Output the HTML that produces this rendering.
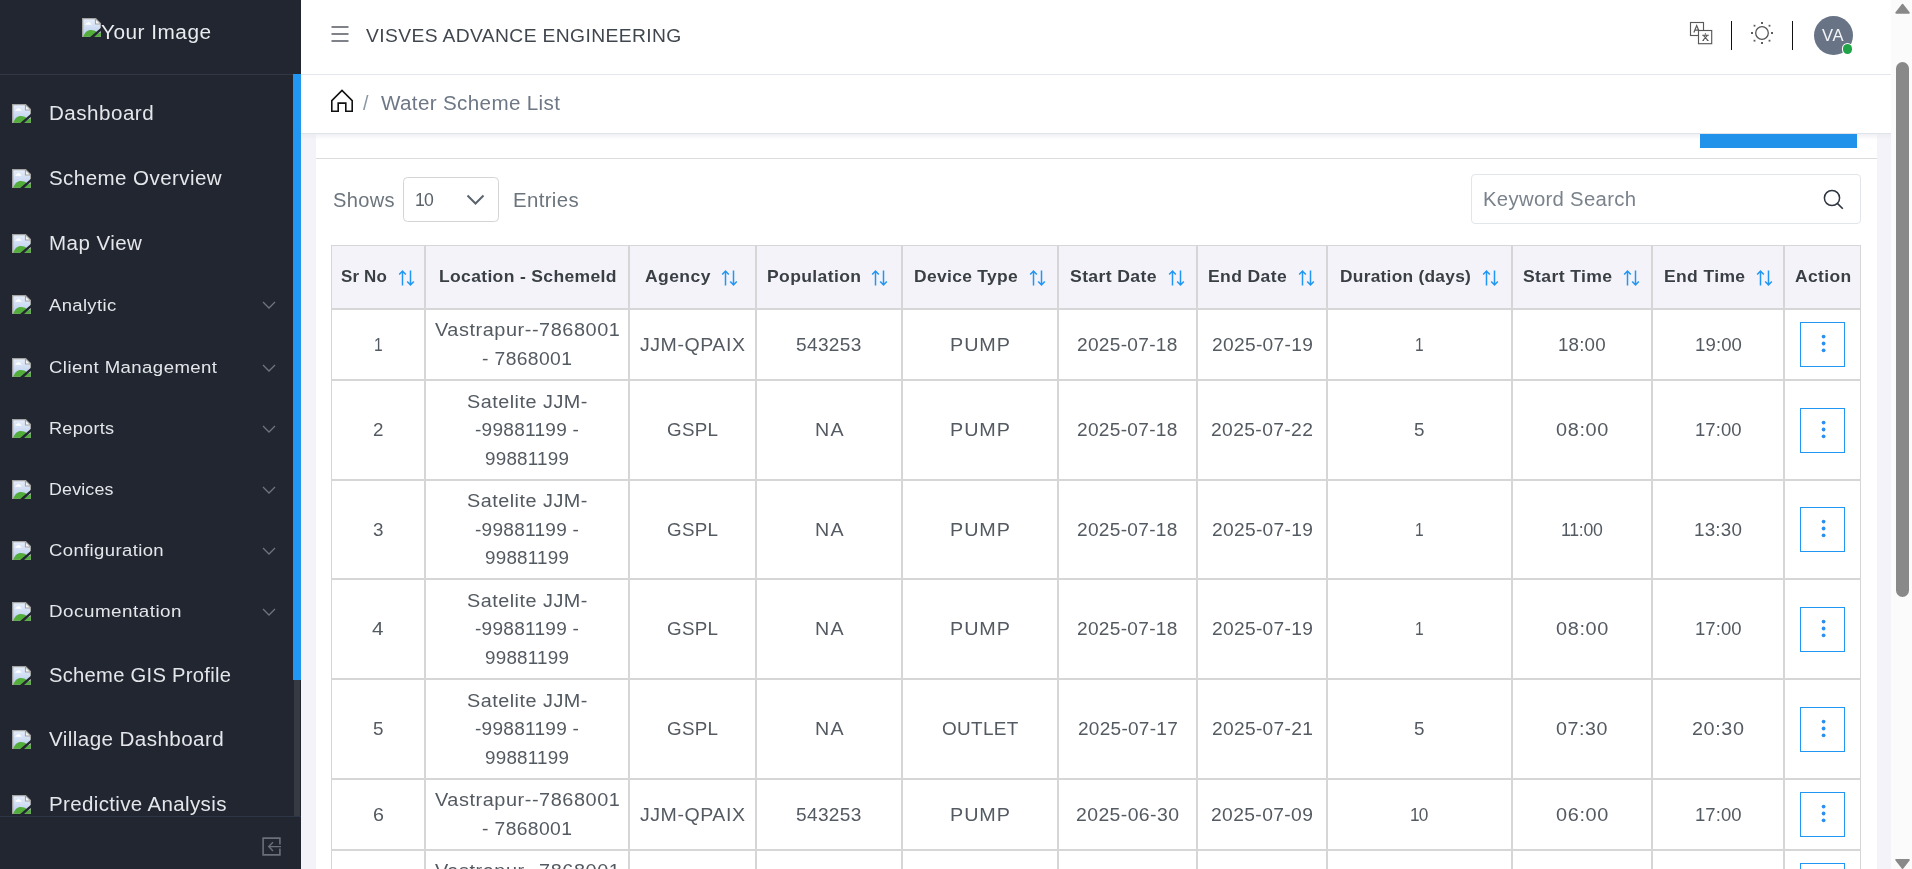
<!DOCTYPE html>
<html><head><meta charset="utf-8"><title>Water Scheme List</title>
<style>
html,body{margin:0;padding:0;width:1912px;height:869px;overflow:hidden;font-family:"Liberation Sans",sans-serif;}
.t{position:absolute;white-space:nowrap;}
.b{position:absolute;}
</style></head><body>
<div style="position:absolute;left:0;top:0;width:1912px;height:869px;overflow:hidden;will-change:transform">
<div class="b" style="left:0px;top:0px;width:1912px;height:869px;background:#f3f3f9;"></div>
<div class="b" style="left:301px;top:0px;width:1590px;height:74px;background:#fff;"></div>
<div class="b" style="left:301px;top:74px;width:1590px;height:1px;background:#e3e6ec;"></div>
<div class="b" style="left:301px;top:75px;width:1590px;height:58px;background:#fff;"></div>
<div class="b" style="left:301px;top:133px;width:1590px;height:1px;background:#dfe3ea;"></div>
<div class="b" style="left:301px;top:134px;width:1590px;height:6px;background:linear-gradient(#ececf2,rgba(243,243,249,0));"></div>
<div class="b" style="left:316px;top:140px;width:1561px;height:729px;background:#fff;"></div>
<div class="b" style="left:316px;top:134px;width:1561px;height:6px;background:linear-gradient(#f0f0f5,#fff);"></div>
<div class="b" style="left:316px;top:158px;width:1561px;height:1px;background:#dcdcdf;"></div>
<div class="b" style="left:1700px;top:134px;width:157px;height:14px;background:#2092ea;"></div>
<div class="b" style="left:0px;top:0px;width:301px;height:869px;background:#212631;"></div>
<div class="b" style="left:0px;top:74px;width:301px;height:1px;background:#323746;"></div>
<div class="b" style="left:293px;top:74px;width:8px;height:606px;background:#2196f3;"></div>
<div class="b" style="left:294px;top:680px;width:6px;height:136px;background:#363a43;"></div>
<div class="b" style="left:0px;top:816px;width:301px;height:1px;background:#2d3646;"></div>
<svg class="b" style="left:81.5px;top:18px" width="19.4" height="19.4" viewBox="0 0 16 16">
<defs><linearGradient id="sky81.518" x1="0" y1="0" x2="0" y2="1"><stop offset="0" stop-color="#e6eefa"/><stop offset="1" stop-color="#b9cdee"/></linearGradient></defs>
<path d="M0.55 0.55H11.1L15.45 4.9V15.45H0.55Z" fill="url(#sky81.518)" stroke="#a3a3a3" stroke-width="1.1"/>
<path d="M11.1 0.55V4.9H15.45Z" fill="#f6f6f6" stroke="#a3a3a3" stroke-width="0.9" stroke-linejoin="round"/>
<path d="M2.6 5.6C2.9 4.6 3.6 4.1 4.3 4.1C4.8 3.1 6.3 3.1 6.8 4.3C7.5 4.4 7.8 5 7.7 5.6Z" fill="#fff"/>
<path d="M1.1 15.45C2 12 4.4 9.8 7.4 9.8C9.4 9.8 10.8 10.5 11.8 11.3V15.45Z" fill="#52ad3b"/>
<path d="M9.8 15.45C11.8 13.6 13.4 12.4 15.45 12V15.45Z" fill="#52ad3b"/>
<path d="M5.7 16.6L8.9 16.6L16.6 9.7L16.6 7.2Z" fill="#212631"/>
</svg>
<div class="t" style="left:101.00px;top:23.0px;font-size:19.5px;line-height:19.5px;color:#e9ecef;letter-spacing:0.458px;transform:scaleX(1.0667);transform-origin:0 0;">Your Image</div>
<svg class="b" style="left:12px;top:104px" width="19.4" height="19.4" viewBox="0 0 16 16">
<defs><linearGradient id="sky12104" x1="0" y1="0" x2="0" y2="1"><stop offset="0" stop-color="#e6eefa"/><stop offset="1" stop-color="#b9cdee"/></linearGradient></defs>
<path d="M0.55 0.55H11.1L15.45 4.9V15.45H0.55Z" fill="url(#sky12104)" stroke="#a3a3a3" stroke-width="1.1"/>
<path d="M11.1 0.55V4.9H15.45Z" fill="#f6f6f6" stroke="#a3a3a3" stroke-width="0.9" stroke-linejoin="round"/>
<path d="M2.6 5.6C2.9 4.6 3.6 4.1 4.3 4.1C4.8 3.1 6.3 3.1 6.8 4.3C7.5 4.4 7.8 5 7.7 5.6Z" fill="#fff"/>
<path d="M1.1 15.45C2 12 4.4 9.8 7.4 9.8C9.4 9.8 10.8 10.5 11.8 11.3V15.45Z" fill="#52ad3b"/>
<path d="M9.8 15.45C11.8 13.6 13.4 12.4 15.45 12V15.45Z" fill="#52ad3b"/>
<path d="M5.7 16.6L8.9 16.6L16.6 9.7L16.6 7.2Z" fill="#212631"/>
</svg>
<div class="t" style="left:48.50px;top:104.0px;font-size:19.4px;line-height:19.4px;color:#e4e6ea;letter-spacing:0.461px;transform:scaleX(1.0620);transform-origin:0 0;">Dashboard</div>
<svg class="b" style="left:12px;top:169px" width="19.4" height="19.4" viewBox="0 0 16 16">
<defs><linearGradient id="sky12169" x1="0" y1="0" x2="0" y2="1"><stop offset="0" stop-color="#e6eefa"/><stop offset="1" stop-color="#b9cdee"/></linearGradient></defs>
<path d="M0.55 0.55H11.1L15.45 4.9V15.45H0.55Z" fill="url(#sky12169)" stroke="#a3a3a3" stroke-width="1.1"/>
<path d="M11.1 0.55V4.9H15.45Z" fill="#f6f6f6" stroke="#a3a3a3" stroke-width="0.9" stroke-linejoin="round"/>
<path d="M2.6 5.6C2.9 4.6 3.6 4.1 4.3 4.1C4.8 3.1 6.3 3.1 6.8 4.3C7.5 4.4 7.8 5 7.7 5.6Z" fill="#fff"/>
<path d="M1.1 15.45C2 12 4.4 9.8 7.4 9.8C9.4 9.8 10.8 10.5 11.8 11.3V15.45Z" fill="#52ad3b"/>
<path d="M9.8 15.45C11.8 13.6 13.4 12.4 15.45 12V15.45Z" fill="#52ad3b"/>
<path d="M5.7 16.6L8.9 16.6L16.6 9.7L16.6 7.2Z" fill="#212631"/>
</svg>
<div class="t" style="left:48.50px;top:169.0px;font-size:19.4px;line-height:19.4px;color:#e4e6ea;letter-spacing:0.413px;transform:scaleX(1.0583);transform-origin:0 0;">Scheme Overview</div>
<svg class="b" style="left:12px;top:234px" width="19.4" height="19.4" viewBox="0 0 16 16">
<defs><linearGradient id="sky12234" x1="0" y1="0" x2="0" y2="1"><stop offset="0" stop-color="#e6eefa"/><stop offset="1" stop-color="#b9cdee"/></linearGradient></defs>
<path d="M0.55 0.55H11.1L15.45 4.9V15.45H0.55Z" fill="url(#sky12234)" stroke="#a3a3a3" stroke-width="1.1"/>
<path d="M11.1 0.55V4.9H15.45Z" fill="#f6f6f6" stroke="#a3a3a3" stroke-width="0.9" stroke-linejoin="round"/>
<path d="M2.6 5.6C2.9 4.6 3.6 4.1 4.3 4.1C4.8 3.1 6.3 3.1 6.8 4.3C7.5 4.4 7.8 5 7.7 5.6Z" fill="#fff"/>
<path d="M1.1 15.45C2 12 4.4 9.8 7.4 9.8C9.4 9.8 10.8 10.5 11.8 11.3V15.45Z" fill="#52ad3b"/>
<path d="M9.8 15.45C11.8 13.6 13.4 12.4 15.45 12V15.45Z" fill="#52ad3b"/>
<path d="M5.7 16.6L8.9 16.6L16.6 9.7L16.6 7.2Z" fill="#212631"/>
</svg>
<div class="t" style="left:48.50px;top:234.0px;font-size:19.4px;line-height:19.4px;color:#e4e6ea;letter-spacing:0.438px;transform:scaleX(1.0572);transform-origin:0 0;">Map View</div>
<svg class="b" style="left:12px;top:295px" width="19.4" height="19.4" viewBox="0 0 16 16">
<defs><linearGradient id="sky12295" x1="0" y1="0" x2="0" y2="1"><stop offset="0" stop-color="#e6eefa"/><stop offset="1" stop-color="#b9cdee"/></linearGradient></defs>
<path d="M0.55 0.55H11.1L15.45 4.9V15.45H0.55Z" fill="url(#sky12295)" stroke="#a3a3a3" stroke-width="1.1"/>
<path d="M11.1 0.55V4.9H15.45Z" fill="#f6f6f6" stroke="#a3a3a3" stroke-width="0.9" stroke-linejoin="round"/>
<path d="M2.6 5.6C2.9 4.6 3.6 4.1 4.3 4.1C4.8 3.1 6.3 3.1 6.8 4.3C7.5 4.4 7.8 5 7.7 5.6Z" fill="#fff"/>
<path d="M1.1 15.45C2 12 4.4 9.8 7.4 9.8C9.4 9.8 10.8 10.5 11.8 11.3V15.45Z" fill="#52ad3b"/>
<path d="M9.8 15.45C11.8 13.6 13.4 12.4 15.45 12V15.45Z" fill="#52ad3b"/>
<path d="M5.7 16.6L8.9 16.6L16.6 9.7L16.6 7.2Z" fill="#212631"/>
</svg>
<div class="t" style="left:48.50px;top:297.0px;font-size:17.4px;line-height:17.4px;color:#e4e6ea;letter-spacing:0.336px;transform:scaleX(1.0615);transform-origin:0 0;">Analytic</div>
<svg class="b" style="left:262px;top:301.3px" width="14" height="8" viewBox="0 0 14 8"><path d="M1 1l6 6 6-6" fill="none" stroke="#6f747e" stroke-width="1.3"/></svg>
<svg class="b" style="left:12px;top:358px" width="19.4" height="19.4" viewBox="0 0 16 16">
<defs><linearGradient id="sky12358" x1="0" y1="0" x2="0" y2="1"><stop offset="0" stop-color="#e6eefa"/><stop offset="1" stop-color="#b9cdee"/></linearGradient></defs>
<path d="M0.55 0.55H11.1L15.45 4.9V15.45H0.55Z" fill="url(#sky12358)" stroke="#a3a3a3" stroke-width="1.1"/>
<path d="M11.1 0.55V4.9H15.45Z" fill="#f6f6f6" stroke="#a3a3a3" stroke-width="0.9" stroke-linejoin="round"/>
<path d="M2.6 5.6C2.9 4.6 3.6 4.1 4.3 4.1C4.8 3.1 6.3 3.1 6.8 4.3C7.5 4.4 7.8 5 7.7 5.6Z" fill="#fff"/>
<path d="M1.1 15.45C2 12 4.4 9.8 7.4 9.8C9.4 9.8 10.8 10.5 11.8 11.3V15.45Z" fill="#52ad3b"/>
<path d="M9.8 15.45C11.8 13.6 13.4 12.4 15.45 12V15.45Z" fill="#52ad3b"/>
<path d="M5.7 16.6L8.9 16.6L16.6 9.7L16.6 7.2Z" fill="#212631"/>
</svg>
<div class="t" style="left:48.50px;top:359.0px;font-size:17.4px;line-height:17.4px;color:#e4e6ea;letter-spacing:0.402px;transform:scaleX(1.0684);transform-origin:0 0;">Client Management</div>
<svg class="b" style="left:262px;top:363.5px" width="14" height="8" viewBox="0 0 14 8"><path d="M1 1l6 6 6-6" fill="none" stroke="#6f747e" stroke-width="1.3"/></svg>
<svg class="b" style="left:12px;top:419px" width="19.4" height="19.4" viewBox="0 0 16 16">
<defs><linearGradient id="sky12419" x1="0" y1="0" x2="0" y2="1"><stop offset="0" stop-color="#e6eefa"/><stop offset="1" stop-color="#b9cdee"/></linearGradient></defs>
<path d="M0.55 0.55H11.1L15.45 4.9V15.45H0.55Z" fill="url(#sky12419)" stroke="#a3a3a3" stroke-width="1.1"/>
<path d="M11.1 0.55V4.9H15.45Z" fill="#f6f6f6" stroke="#a3a3a3" stroke-width="0.9" stroke-linejoin="round"/>
<path d="M2.6 5.6C2.9 4.6 3.6 4.1 4.3 4.1C4.8 3.1 6.3 3.1 6.8 4.3C7.5 4.4 7.8 5 7.7 5.6Z" fill="#fff"/>
<path d="M1.1 15.45C2 12 4.4 9.8 7.4 9.8C9.4 9.8 10.8 10.5 11.8 11.3V15.45Z" fill="#52ad3b"/>
<path d="M9.8 15.45C11.8 13.6 13.4 12.4 15.45 12V15.45Z" fill="#52ad3b"/>
<path d="M5.7 16.6L8.9 16.6L16.6 9.7L16.6 7.2Z" fill="#212631"/>
</svg>
<div class="t" style="left:48.50px;top:420.0px;font-size:17.4px;line-height:17.4px;color:#e4e6ea;letter-spacing:0.272px;transform:scaleX(1.0418);transform-origin:0 0;">Reports</div>
<svg class="b" style="left:262px;top:424.7px" width="14" height="8" viewBox="0 0 14 8"><path d="M1 1l6 6 6-6" fill="none" stroke="#6f747e" stroke-width="1.3"/></svg>
<svg class="b" style="left:12px;top:480px" width="19.4" height="19.4" viewBox="0 0 16 16">
<defs><linearGradient id="sky12480" x1="0" y1="0" x2="0" y2="1"><stop offset="0" stop-color="#e6eefa"/><stop offset="1" stop-color="#b9cdee"/></linearGradient></defs>
<path d="M0.55 0.55H11.1L15.45 4.9V15.45H0.55Z" fill="url(#sky12480)" stroke="#a3a3a3" stroke-width="1.1"/>
<path d="M11.1 0.55V4.9H15.45Z" fill="#f6f6f6" stroke="#a3a3a3" stroke-width="0.9" stroke-linejoin="round"/>
<path d="M2.6 5.6C2.9 4.6 3.6 4.1 4.3 4.1C4.8 3.1 6.3 3.1 6.8 4.3C7.5 4.4 7.8 5 7.7 5.6Z" fill="#fff"/>
<path d="M1.1 15.45C2 12 4.4 9.8 7.4 9.8C9.4 9.8 10.8 10.5 11.8 11.3V15.45Z" fill="#52ad3b"/>
<path d="M9.8 15.45C11.8 13.6 13.4 12.4 15.45 12V15.45Z" fill="#52ad3b"/>
<path d="M5.7 16.6L8.9 16.6L16.6 9.7L16.6 7.2Z" fill="#212631"/>
</svg>
<div class="t" style="left:48.50px;top:481.0px;font-size:17.4px;line-height:17.4px;color:#e4e6ea;letter-spacing:0.169px;transform:scaleX(1.0252);transform-origin:0 0;">Devices</div>
<svg class="b" style="left:262px;top:485.7px" width="14" height="8" viewBox="0 0 14 8"><path d="M1 1l6 6 6-6" fill="none" stroke="#6f747e" stroke-width="1.3"/></svg>
<svg class="b" style="left:12px;top:541px" width="19.4" height="19.4" viewBox="0 0 16 16">
<defs><linearGradient id="sky12541" x1="0" y1="0" x2="0" y2="1"><stop offset="0" stop-color="#e6eefa"/><stop offset="1" stop-color="#b9cdee"/></linearGradient></defs>
<path d="M0.55 0.55H11.1L15.45 4.9V15.45H0.55Z" fill="url(#sky12541)" stroke="#a3a3a3" stroke-width="1.1"/>
<path d="M11.1 0.55V4.9H15.45Z" fill="#f6f6f6" stroke="#a3a3a3" stroke-width="0.9" stroke-linejoin="round"/>
<path d="M2.6 5.6C2.9 4.6 3.6 4.1 4.3 4.1C4.8 3.1 6.3 3.1 6.8 4.3C7.5 4.4 7.8 5 7.7 5.6Z" fill="#fff"/>
<path d="M1.1 15.45C2 12 4.4 9.8 7.4 9.8C9.4 9.8 10.8 10.5 11.8 11.3V15.45Z" fill="#52ad3b"/>
<path d="M9.8 15.45C11.8 13.6 13.4 12.4 15.45 12V15.45Z" fill="#52ad3b"/>
<path d="M5.7 16.6L8.9 16.6L16.6 9.7L16.6 7.2Z" fill="#212631"/>
</svg>
<div class="t" style="left:48.50px;top:542.0px;font-size:17.4px;line-height:17.4px;color:#e4e6ea;letter-spacing:0.351px;transform:scaleX(1.0649);transform-origin:0 0;">Configuration</div>
<svg class="b" style="left:262px;top:546.7px" width="14" height="8" viewBox="0 0 14 8"><path d="M1 1l6 6 6-6" fill="none" stroke="#6f747e" stroke-width="1.3"/></svg>
<svg class="b" style="left:12px;top:602px" width="19.4" height="19.4" viewBox="0 0 16 16">
<defs><linearGradient id="sky12602" x1="0" y1="0" x2="0" y2="1"><stop offset="0" stop-color="#e6eefa"/><stop offset="1" stop-color="#b9cdee"/></linearGradient></defs>
<path d="M0.55 0.55H11.1L15.45 4.9V15.45H0.55Z" fill="url(#sky12602)" stroke="#a3a3a3" stroke-width="1.1"/>
<path d="M11.1 0.55V4.9H15.45Z" fill="#f6f6f6" stroke="#a3a3a3" stroke-width="0.9" stroke-linejoin="round"/>
<path d="M2.6 5.6C2.9 4.6 3.6 4.1 4.3 4.1C4.8 3.1 6.3 3.1 6.8 4.3C7.5 4.4 7.8 5 7.7 5.6Z" fill="#fff"/>
<path d="M1.1 15.45C2 12 4.4 9.8 7.4 9.8C9.4 9.8 10.8 10.5 11.8 11.3V15.45Z" fill="#52ad3b"/>
<path d="M9.8 15.45C11.8 13.6 13.4 12.4 15.45 12V15.45Z" fill="#52ad3b"/>
<path d="M5.7 16.6L8.9 16.6L16.6 9.7L16.6 7.2Z" fill="#212631"/>
</svg>
<div class="t" style="left:48.50px;top:603.0px;font-size:17.4px;line-height:17.4px;color:#e4e6ea;letter-spacing:0.480px;transform:scaleX(1.0797);transform-origin:0 0;">Documentation</div>
<svg class="b" style="left:262px;top:607.8px" width="14" height="8" viewBox="0 0 14 8"><path d="M1 1l6 6 6-6" fill="none" stroke="#6f747e" stroke-width="1.3"/></svg>
<svg class="b" style="left:12px;top:666px" width="19.4" height="19.4" viewBox="0 0 16 16">
<defs><linearGradient id="sky12666" x1="0" y1="0" x2="0" y2="1"><stop offset="0" stop-color="#e6eefa"/><stop offset="1" stop-color="#b9cdee"/></linearGradient></defs>
<path d="M0.55 0.55H11.1L15.45 4.9V15.45H0.55Z" fill="url(#sky12666)" stroke="#a3a3a3" stroke-width="1.1"/>
<path d="M11.1 0.55V4.9H15.45Z" fill="#f6f6f6" stroke="#a3a3a3" stroke-width="0.9" stroke-linejoin="round"/>
<path d="M2.6 5.6C2.9 4.6 3.6 4.1 4.3 4.1C4.8 3.1 6.3 3.1 6.8 4.3C7.5 4.4 7.8 5 7.7 5.6Z" fill="#fff"/>
<path d="M1.1 15.45C2 12 4.4 9.8 7.4 9.8C9.4 9.8 10.8 10.5 11.8 11.3V15.45Z" fill="#52ad3b"/>
<path d="M9.8 15.45C11.8 13.6 13.4 12.4 15.45 12V15.45Z" fill="#52ad3b"/>
<path d="M5.7 16.6L8.9 16.6L16.6 9.7L16.6 7.2Z" fill="#212631"/>
</svg>
<div class="t" style="left:48.50px;top:666.0px;font-size:19.4px;line-height:19.4px;color:#e4e6ea;letter-spacing:0.263px;transform:scaleX(1.0410);transform-origin:0 0;">Scheme GIS Profile</div>
<svg class="b" style="left:12px;top:730px" width="19.4" height="19.4" viewBox="0 0 16 16">
<defs><linearGradient id="sky12730" x1="0" y1="0" x2="0" y2="1"><stop offset="0" stop-color="#e6eefa"/><stop offset="1" stop-color="#b9cdee"/></linearGradient></defs>
<path d="M0.55 0.55H11.1L15.45 4.9V15.45H0.55Z" fill="url(#sky12730)" stroke="#a3a3a3" stroke-width="1.1"/>
<path d="M11.1 0.55V4.9H15.45Z" fill="#f6f6f6" stroke="#a3a3a3" stroke-width="0.9" stroke-linejoin="round"/>
<path d="M2.6 5.6C2.9 4.6 3.6 4.1 4.3 4.1C4.8 3.1 6.3 3.1 6.8 4.3C7.5 4.4 7.8 5 7.7 5.6Z" fill="#fff"/>
<path d="M1.1 15.45C2 12 4.4 9.8 7.4 9.8C9.4 9.8 10.8 10.5 11.8 11.3V15.45Z" fill="#52ad3b"/>
<path d="M9.8 15.45C11.8 13.6 13.4 12.4 15.45 12V15.45Z" fill="#52ad3b"/>
<path d="M5.7 16.6L8.9 16.6L16.6 9.7L16.6 7.2Z" fill="#212631"/>
</svg>
<div class="t" style="left:48.50px;top:730.0px;font-size:19.4px;line-height:19.4px;color:#e4e6ea;letter-spacing:0.390px;transform:scaleX(1.0630);transform-origin:0 0;">Village Dashboard</div>
<svg class="b" style="left:12px;top:795px" width="19.4" height="19.4" viewBox="0 0 16 16">
<defs><linearGradient id="sky12795" x1="0" y1="0" x2="0" y2="1"><stop offset="0" stop-color="#e6eefa"/><stop offset="1" stop-color="#b9cdee"/></linearGradient></defs>
<path d="M0.55 0.55H11.1L15.45 4.9V15.45H0.55Z" fill="url(#sky12795)" stroke="#a3a3a3" stroke-width="1.1"/>
<path d="M11.1 0.55V4.9H15.45Z" fill="#f6f6f6" stroke="#a3a3a3" stroke-width="0.9" stroke-linejoin="round"/>
<path d="M2.6 5.6C2.9 4.6 3.6 4.1 4.3 4.1C4.8 3.1 6.3 3.1 6.8 4.3C7.5 4.4 7.8 5 7.7 5.6Z" fill="#fff"/>
<path d="M1.1 15.45C2 12 4.4 9.8 7.4 9.8C9.4 9.8 10.8 10.5 11.8 11.3V15.45Z" fill="#52ad3b"/>
<path d="M9.8 15.45C11.8 13.6 13.4 12.4 15.45 12V15.45Z" fill="#52ad3b"/>
<path d="M5.7 16.6L8.9 16.6L16.6 9.7L16.6 7.2Z" fill="#212631"/>
</svg>
<div class="t" style="left:48.50px;top:795.0px;font-size:19.4px;line-height:19.4px;color:#e4e6ea;letter-spacing:0.331px;transform:scaleX(1.0584);transform-origin:0 0;">Predictive Analysis</div>
<div class="b" style="left:0px;top:817px;width:293px;height:52px;background:#212631;"></div>
<div class="b" style="left:293px;top:817px;width:8px;height:52px;background:#212631;"></div>
<svg class="b" style="left:262px;top:837px" width="20" height="20" viewBox="0 0 20 20"><path d="M17.9 7.6V1.1H1.1V17.9H17.9V11.6" fill="none" stroke="#6b6f78" stroke-width="1.6"/><path d="M19 9.6H7M11 5.3L6.7 9.6 11 13.9" fill="none" stroke="#6b6f78" stroke-width="1.4"/></svg>
<svg class="b" style="left:331px;top:25px" width="18" height="18" viewBox="0 0 18 18"><path d="M0.5 2h17M0.5 9h17M0.5 16h17" stroke="#555b63" stroke-width="1.4"/></svg>
<div class="t" style="left:366.00px;top:27.0px;font-size:18.4px;line-height:18.4px;color:#40464e;letter-spacing:0.356px;transform:scaleX(1.0479);transform-origin:0 0;">VISVES ADVANCE ENGINEERING</div>
<svg class="b" style="left:1688px;top:20px" width="26" height="26" viewBox="0 0 26 26">
<rect x="2.5" y="2.5" width="13" height="13" fill="#fff" stroke="#595959" stroke-width="1.15"/>
<path d="M5.9 12.4L8.7 5.6L11.6 12.4M7 10.1H10.5" fill="none" stroke="#595959" stroke-width="1.25"/>
<rect x="10.5" y="10.5" width="13.2" height="13.2" fill="#fff" stroke="#595959" stroke-width="1.15"/>
<path d="M17.4 13.2V14.6M14.2 15.2H20.8M15.6 15.6L19.8 20.4M19.2 15.6L15 20.4M14.4 20.5H16M18.8 20.5H20.6" fill="none" stroke="#595959" stroke-width="1.1"/>
</svg>
<div class="b" style="left:1731px;top:21px;width:1.4px;height:29px;background:#111;"></div>
<svg class="b" style="left:1748px;top:19px" width="28" height="28" viewBox="0 0 28 28">
<circle cx="14" cy="14" r="6.3" fill="none" stroke="#555" stroke-width="1.3"/>
<g fill="#5e5e5e"><rect x="13" y="3" width="2" height="2"/><rect x="13" y="23" width="2" height="2"/><rect x="3" y="13" width="2" height="2"/><rect x="23" y="13" width="2" height="2"/>
<rect x="5.6" y="5.8" width="1.8" height="1.8"/><rect x="20.6" y="5.8" width="1.8" height="1.8"/><rect x="5.6" y="20.8" width="1.8" height="1.8"/><rect x="20.6" y="20.8" width="1.8" height="1.8"/></g>
</svg>
<div class="b" style="left:1792px;top:21px;width:1.4px;height:29px;background:#111;"></div>
<div class="b" style="left:1814px;top:15.7px;width:39px;height:39px;background:#687486;border-radius:50%;"></div>
<div class="t" style="left:1822.45px;top:28.0px;font-size:15.8px;line-height:15.8px;color:#f4f5f7;letter-spacing:0.611px;transform:scaleX(1.0482);transform-origin:0 0;">VA</div>
<div class="b" style="left:1842.7px;top:44.4px;width:9.4px;height:9.4px;background:#1fa447;border-radius:50%;box-shadow:0 0 0 1px #fff;"></div>
<div class="b" style="left:1891px;top:0px;width:21px;height:869px;background:#fbfbfb;"></div>
<svg class="b" style="left:1894px;top:2px" width="17" height="14" viewBox="0 0 17 14"><path d="M8.55 2.8L14.8 10.8H2.3z" fill="#898989" stroke="#898989" stroke-width="2" stroke-linejoin="round"/></svg>
<div class="b" style="left:1896px;top:62px;width:13px;height:535px;background:#898989;border-radius:6.5px;"></div>
<svg class="b" style="left:1894px;top:857px" width="17" height="14" viewBox="0 0 17 14"><path d="M2.3 2.9H14.8L8.55 10.9z" fill="#898989" stroke="#898989" stroke-width="2" stroke-linejoin="round"/></svg>
<svg class="b" style="left:330px;top:89px" width="24" height="24" viewBox="0 0 24 24"><path d="M1.8 22.3V11.7L12 1.5l10.2 10.2v10.6h-6.4v-8.2H8.2v8.2z" fill="none" stroke="#111" stroke-width="1.6" stroke-linejoin="miter"/></svg>
<div class="t" style="left:363.00px;top:94.0px;font-size:19.5px;line-height:19.5px;color:#8a96a3;">/</div>
<div class="t" style="left:380.60px;top:94.0px;font-size:19.6px;line-height:19.6px;color:#6d7785;letter-spacing:0.336px;transform:scaleX(1.0515);transform-origin:0 0;">Water Scheme List</div>
<div class="t" style="left:332.60px;top:191.0px;font-size:19.4px;line-height:19.4px;color:#6c757d;letter-spacing:0.333px;transform:scaleX(1.0355);transform-origin:0 0;">Shows</div>
<div class="b" style="left:403px;top:177px;width:96px;height:45px;background:#fff;border:1px solid #d4d4d4;border-radius:4.5px;box-sizing:border-box;"></div>
<div class="t" style="left:415.10px;top:191.0px;font-size:18.8px;line-height:18.8px;color:#5a6168;letter-spacing:-0.939px;transform:scaleX(0.9368);transform-origin:0 0;">10</div>
<svg class="b" style="left:465px;top:192px" width="21" height="15" viewBox="0 0 21 15"><path d="M2.5 3.5l8 8 8-8" fill="none" stroke="#5a636e" stroke-width="2"/></svg>
<div class="t" style="left:513.20px;top:191.0px;font-size:19.4px;line-height:19.4px;color:#6c757d;letter-spacing:0.336px;transform:scaleX(1.0526);transform-origin:0 0;">Entries</div>
<div class="b" style="left:1471px;top:174px;width:390px;height:50px;background:#fff;border:1px solid #e2e5e9;border-radius:4px;box-sizing:border-box;"></div>
<div class="t" style="left:1482.50px;top:190.0px;font-size:19.5px;line-height:19.5px;color:#7a828c;letter-spacing:0.294px;transform:scaleX(1.0417);transform-origin:0 0;">Keyword Search</div>
<svg class="b" style="left:1821px;top:187px" width="26" height="26" viewBox="0 0 26 26"><circle cx="11" cy="11" r="7.6" fill="none" stroke="#2f3540" stroke-width="1.5"/><path d="M16.6 16.6l5.2 5.2" stroke="#2f3540" stroke-width="1.6"/></svg>
<div class="b" style="left:331px;top:245px;width:1530px;height:64px;background:#f3f3f9;"></div>
<div class="b" style="left:331px;top:310px;width:1530px;height:560px;background:#fff;"></div>
<div class="b" style="left:331px;top:245px;width:1px;height:624px;background:#d6d6d6;"></div>
<div class="b" style="left:1860px;top:245px;width:1px;height:624px;background:#d6d6d6;"></div>
<div class="b" style="left:424px;top:245px;width:2px;height:624px;background:#d6d6d6;"></div>
<div class="b" style="left:628px;top:245px;width:2px;height:624px;background:#d6d6d6;"></div>
<div class="b" style="left:755px;top:245px;width:2px;height:624px;background:#d6d6d6;"></div>
<div class="b" style="left:901px;top:245px;width:2px;height:624px;background:#d6d6d6;"></div>
<div class="b" style="left:1057px;top:245px;width:2px;height:624px;background:#d6d6d6;"></div>
<div class="b" style="left:1196px;top:245px;width:2px;height:624px;background:#d6d6d6;"></div>
<div class="b" style="left:1326px;top:245px;width:2px;height:624px;background:#d6d6d6;"></div>
<div class="b" style="left:1511px;top:245px;width:2px;height:624px;background:#d6d6d6;"></div>
<div class="b" style="left:1651px;top:245px;width:2px;height:624px;background:#d6d6d6;"></div>
<div class="b" style="left:1783px;top:245px;width:2px;height:624px;background:#d6d6d6;"></div>
<div class="b" style="left:331px;top:245px;width:1530px;height:1px;background:#d6d6d6;"></div>
<div class="b" style="left:331px;top:308px;width:1530px;height:2px;background:#d6d6d6;"></div>
<div class="b" style="left:331px;top:379px;width:1530px;height:2px;background:#d6d6d6;"></div>
<div class="b" style="left:331px;top:479px;width:1530px;height:2px;background:#d6d6d6;"></div>
<div class="b" style="left:331px;top:578px;width:1530px;height:2px;background:#d6d6d6;"></div>
<div class="b" style="left:331px;top:678px;width:1530px;height:2px;background:#d6d6d6;"></div>
<div class="b" style="left:331px;top:778px;width:1530px;height:2px;background:#d6d6d6;"></div>
<div class="b" style="left:331px;top:849px;width:1530px;height:2px;background:#d6d6d6;"></div>
<div class="t" style="left:341.00px;top:269.0px;font-size:16.6px;line-height:16.6px;color:#3a3f46;letter-spacing:0.152px;transform:scaleX(1.0210);transform-origin:0 0;font-weight:bold;">Sr No</div>
<svg class="b" style="left:398px;top:269px" width="18" height="18" viewBox="0 0 18 18"><path d="M4.5 16.5V2M1.2 5.5L4.5 2l3.3 3.5M12.5 1.5V16M9.2 12.5l3.3 3.5 3.3-3.5" fill="none" stroke="#2196f3" stroke-width="1.5"/></svg>
<div class="t" style="left:438.50px;top:269.0px;font-size:16.6px;line-height:16.6px;color:#3a3f46;letter-spacing:0.319px;transform:scaleX(1.0560);transform-origin:0 0;font-weight:bold;">Location - SchemeId</div>
<div class="t" style="left:645.00px;top:269.0px;font-size:16.6px;line-height:16.6px;color:#3a3f46;letter-spacing:0.413px;transform:scaleX(1.0545);transform-origin:0 0;font-weight:bold;">Agency</div>
<svg class="b" style="left:720.9px;top:269px" width="18" height="18" viewBox="0 0 18 18"><path d="M4.5 16.5V2M1.2 5.5L4.5 2l3.3 3.5M12.5 1.5V16M9.2 12.5l3.3 3.5 3.3-3.5" fill="none" stroke="#2196f3" stroke-width="1.5"/></svg>
<div class="t" style="left:767.30px;top:269.0px;font-size:16.6px;line-height:16.6px;color:#3a3f46;letter-spacing:0.347px;transform:scaleX(1.0577);transform-origin:0 0;font-weight:bold;">Population</div>
<svg class="b" style="left:871.3px;top:269px" width="18" height="18" viewBox="0 0 18 18"><path d="M4.5 16.5V2M1.2 5.5L4.5 2l3.3 3.5M12.5 1.5V16M9.2 12.5l3.3 3.5 3.3-3.5" fill="none" stroke="#2196f3" stroke-width="1.5"/></svg>
<div class="t" style="left:914.10px;top:269.0px;font-size:16.6px;line-height:16.6px;color:#3a3f46;letter-spacing:0.310px;transform:scaleX(1.0511);transform-origin:0 0;font-weight:bold;">Device Type</div>
<svg class="b" style="left:1029.2px;top:269px" width="18" height="18" viewBox="0 0 18 18"><path d="M4.5 16.5V2M1.2 5.5L4.5 2l3.3 3.5M12.5 1.5V16M9.2 12.5l3.3 3.5 3.3-3.5" fill="none" stroke="#2196f3" stroke-width="1.5"/></svg>
<div class="t" style="left:1069.70px;top:269.0px;font-size:16.6px;line-height:16.6px;color:#3a3f46;letter-spacing:0.343px;transform:scaleX(1.0628);transform-origin:0 0;font-weight:bold;">Start Date</div>
<svg class="b" style="left:1167.6px;top:269px" width="18" height="18" viewBox="0 0 18 18"><path d="M4.5 16.5V2M1.2 5.5L4.5 2l3.3 3.5M12.5 1.5V16M9.2 12.5l3.3 3.5 3.3-3.5" fill="none" stroke="#2196f3" stroke-width="1.5"/></svg>
<div class="t" style="left:1208.30px;top:269.0px;font-size:16.6px;line-height:16.6px;color:#3a3f46;letter-spacing:0.365px;transform:scaleX(1.0563);transform-origin:0 0;font-weight:bold;">End Date</div>
<svg class="b" style="left:1298px;top:269px" width="18" height="18" viewBox="0 0 18 18"><path d="M4.5 16.5V2M1.2 5.5L4.5 2l3.3 3.5M12.5 1.5V16M9.2 12.5l3.3 3.5 3.3-3.5" fill="none" stroke="#2196f3" stroke-width="1.5"/></svg>
<div class="t" style="left:1339.60px;top:269.0px;font-size:16.6px;line-height:16.6px;color:#3a3f46;letter-spacing:0.250px;transform:scaleX(1.0451);transform-origin:0 0;font-weight:bold;">Duration (days)</div>
<svg class="b" style="left:1482.1px;top:269px" width="18" height="18" viewBox="0 0 18 18"><path d="M4.5 16.5V2M1.2 5.5L4.5 2l3.3 3.5M12.5 1.5V16M9.2 12.5l3.3 3.5 3.3-3.5" fill="none" stroke="#2196f3" stroke-width="1.5"/></svg>
<div class="t" style="left:1523.40px;top:269.0px;font-size:16.6px;line-height:16.6px;color:#3a3f46;letter-spacing:0.347px;transform:scaleX(1.0616);transform-origin:0 0;font-weight:bold;">Start Time</div>
<svg class="b" style="left:1623px;top:269px" width="18" height="18" viewBox="0 0 18 18"><path d="M4.5 16.5V2M1.2 5.5L4.5 2l3.3 3.5M12.5 1.5V16M9.2 12.5l3.3 3.5 3.3-3.5" fill="none" stroke="#2196f3" stroke-width="1.5"/></svg>
<div class="t" style="left:1663.80px;top:269.0px;font-size:16.6px;line-height:16.6px;color:#3a3f46;letter-spacing:0.363px;transform:scaleX(1.0540);transform-origin:0 0;font-weight:bold;">End Time</div>
<svg class="b" style="left:1756.3px;top:269px" width="18" height="18" viewBox="0 0 18 18"><path d="M4.5 16.5V2M1.2 5.5L4.5 2l3.3 3.5M12.5 1.5V16M9.2 12.5l3.3 3.5 3.3-3.5" fill="none" stroke="#2196f3" stroke-width="1.5"/></svg>
<div class="t" style="left:1794.70px;top:269.0px;font-size:16.6px;line-height:16.6px;color:#3a3f46;letter-spacing:0.339px;transform:scaleX(1.0517);transform-origin:0 0;font-weight:bold;">Action</div>
<div class="t" style="left:373.67px;top:336.0px;font-size:18.3px;line-height:18.3px;color:#545a61;transform:scaleX(0.8500);transform-origin:0 0;">1</div>
<div class="t" style="left:434.50px;top:321.0px;font-size:18.3px;line-height:18.3px;color:#545a61;letter-spacing:0.511px;transform:scaleX(1.0877);transform-origin:0 0;">Vastrapur--7868001</div>
<div class="t" style="left:482.00px;top:350.0px;font-size:18.3px;line-height:18.3px;color:#545a61;letter-spacing:0.360px;transform:scaleX(1.0553);transform-origin:0 0;">- 7868001</div>
<div class="t" style="left:640.00px;top:336.0px;font-size:18.3px;line-height:18.3px;color:#545a61;letter-spacing:0.505px;transform:scaleX(1.0688);transform-origin:0 0;">JJM-QPAIX</div>
<div class="t" style="left:796.30px;top:336.0px;font-size:18.3px;line-height:18.3px;color:#545a61;letter-spacing:0.334px;transform:scaleX(1.0428);transform-origin:0 0;">543253</div>
<div class="t" style="left:950.00px;top:336.0px;font-size:18.3px;line-height:18.3px;color:#545a61;letter-spacing:0.882px;transform:scaleX(1.0812);transform-origin:0 0;">PUMP</div>
<div class="t" style="left:1077.30px;top:336.0px;font-size:18.3px;line-height:18.3px;color:#545a61;letter-spacing:0.290px;transform:scaleX(1.0436);transform-origin:0 0;">2025-07-18</div>
<div class="t" style="left:1211.50px;top:336.0px;font-size:18.3px;line-height:18.3px;color:#545a61;letter-spacing:0.314px;transform:scaleX(1.0474);transform-origin:0 0;">2025-07-19</div>
<div class="t" style="left:1415.16px;top:336.0px;font-size:18.3px;line-height:18.3px;color:#545a61;transform:scaleX(0.8500);transform-origin:0 0;">1</div>
<div class="t" style="left:1558.15px;top:336.0px;font-size:18.3px;line-height:18.3px;color:#545a61;letter-spacing:0.185px;transform:scaleX(1.0249);transform-origin:0 0;">18:00</div>
<div class="t" style="left:1694.50px;top:336.0px;font-size:18.3px;line-height:18.3px;color:#545a61;letter-spacing:0.118px;transform:scaleX(1.0157);transform-origin:0 0;">19:00</div>
<div class="b" style="left:1800px;top:322px;width:45px;height:45px;border:1.2px solid #2196f3;box-sizing:border-box;background:#fff;"></div>
<svg class="b" style="left:1819.5px;top:332px" width="8" height="24" viewBox="0 0 8 24"><circle cx="3.6" cy="4.6" r="1.9" fill="#2a8ff0"/><circle cx="3.6" cy="11.5" r="1.9" fill="#2a8ff0"/><circle cx="3.6" cy="18.3" r="1.9" fill="#2a8ff0"/></svg>
<div class="t" style="left:372.75px;top:421.0px;font-size:18.3px;line-height:18.3px;color:#545a61;transform:scaleX(1.0294);transform-origin:0 0;">2</div>
<div class="t" style="left:466.75px;top:393.0px;font-size:18.3px;line-height:18.3px;color:#545a61;letter-spacing:0.454px;transform:scaleX(1.0837);transform-origin:0 0;">Satelite JJM-</div>
<div class="t" style="left:475.00px;top:421.0px;font-size:18.3px;line-height:18.3px;color:#545a61;letter-spacing:0.256px;transform:scaleX(1.0410);transform-origin:0 0;">-99881199 -</div>
<div class="t" style="left:485.00px;top:450.0px;font-size:18.3px;line-height:18.3px;color:#545a61;letter-spacing:0.219px;transform:scaleX(1.0296);transform-origin:0 0;">99881199</div>
<div class="t" style="left:667.00px;top:421.0px;font-size:18.3px;line-height:18.3px;color:#545a61;letter-spacing:0.286px;transform:scaleX(1.0270);transform-origin:0 0;">GSPL</div>
<div class="t" style="left:814.70px;top:421.0px;font-size:18.3px;line-height:18.3px;color:#545a61;letter-spacing:1.190px;transform:scaleX(1.0756);transform-origin:0 0;">NA</div>
<div class="t" style="left:950.00px;top:421.0px;font-size:18.3px;line-height:18.3px;color:#545a61;letter-spacing:0.882px;transform:scaleX(1.0812);transform-origin:0 0;">PUMP</div>
<div class="t" style="left:1077.30px;top:421.0px;font-size:18.3px;line-height:18.3px;color:#545a61;letter-spacing:0.290px;transform:scaleX(1.0436);transform-origin:0 0;">2025-07-18</div>
<div class="t" style="left:1211.00px;top:421.0px;font-size:18.3px;line-height:18.3px;color:#545a61;letter-spacing:0.354px;transform:scaleX(1.0538);transform-origin:0 0;">2025-07-22</div>
<div class="t" style="left:1414.25px;top:421.0px;font-size:18.3px;line-height:18.3px;color:#545a61;transform:scaleX(1.0294);transform-origin:0 0;">5</div>
<div class="t" style="left:1555.80px;top:421.0px;font-size:18.3px;line-height:18.3px;color:#545a61;letter-spacing:0.607px;transform:scaleX(1.0865);transform-origin:0 0;">08:00</div>
<div class="t" style="left:1694.70px;top:421.0px;font-size:18.3px;line-height:18.3px;color:#545a61;letter-spacing:0.079px;transform:scaleX(1.0105);transform-origin:0 0;">17:00</div>
<div class="b" style="left:1800px;top:408px;width:45px;height:45px;border:1.2px solid #2196f3;box-sizing:border-box;background:#fff;"></div>
<svg class="b" style="left:1819.5px;top:418px" width="8" height="24" viewBox="0 0 8 24"><circle cx="3.6" cy="4.6" r="1.9" fill="#2a8ff0"/><circle cx="3.6" cy="11.5" r="1.9" fill="#2a8ff0"/><circle cx="3.6" cy="18.3" r="1.9" fill="#2a8ff0"/></svg>
<div class="t" style="left:372.75px;top:521.0px;font-size:18.3px;line-height:18.3px;color:#545a61;transform:scaleX(1.0294);transform-origin:0 0;">3</div>
<div class="t" style="left:466.75px;top:492.0px;font-size:18.3px;line-height:18.3px;color:#545a61;letter-spacing:0.454px;transform:scaleX(1.0837);transform-origin:0 0;">Satelite JJM-</div>
<div class="t" style="left:475.00px;top:521.0px;font-size:18.3px;line-height:18.3px;color:#545a61;letter-spacing:0.256px;transform:scaleX(1.0410);transform-origin:0 0;">-99881199 -</div>
<div class="t" style="left:485.00px;top:549.0px;font-size:18.3px;line-height:18.3px;color:#545a61;letter-spacing:0.219px;transform:scaleX(1.0296);transform-origin:0 0;">99881199</div>
<div class="t" style="left:667.00px;top:521.0px;font-size:18.3px;line-height:18.3px;color:#545a61;letter-spacing:0.286px;transform:scaleX(1.0270);transform-origin:0 0;">GSPL</div>
<div class="t" style="left:814.70px;top:521.0px;font-size:18.3px;line-height:18.3px;color:#545a61;letter-spacing:1.190px;transform:scaleX(1.0756);transform-origin:0 0;">NA</div>
<div class="t" style="left:950.00px;top:521.0px;font-size:18.3px;line-height:18.3px;color:#545a61;letter-spacing:0.882px;transform:scaleX(1.0812);transform-origin:0 0;">PUMP</div>
<div class="t" style="left:1077.30px;top:521.0px;font-size:18.3px;line-height:18.3px;color:#545a61;letter-spacing:0.290px;transform:scaleX(1.0436);transform-origin:0 0;">2025-07-18</div>
<div class="t" style="left:1211.50px;top:521.0px;font-size:18.3px;line-height:18.3px;color:#545a61;letter-spacing:0.314px;transform:scaleX(1.0474);transform-origin:0 0;">2025-07-19</div>
<div class="t" style="left:1415.16px;top:521.0px;font-size:18.3px;line-height:18.3px;color:#545a61;transform:scaleX(0.8500);transform-origin:0 0;">1</div>
<div class="t" style="left:1561.00px;top:521.0px;font-size:18.3px;line-height:18.3px;color:#545a61;letter-spacing:-0.253px;transform:scaleX(0.9669);transform-origin:0 0;">11:00</div>
<div class="t" style="left:1694.00px;top:521.0px;font-size:18.3px;line-height:18.3px;color:#545a61;letter-spacing:0.214px;transform:scaleX(1.0288);transform-origin:0 0;">13:30</div>
<div class="b" style="left:1800px;top:507px;width:45px;height:45px;border:1.2px solid #2196f3;box-sizing:border-box;background:#fff;"></div>
<svg class="b" style="left:1819.5px;top:517px" width="8" height="24" viewBox="0 0 8 24"><circle cx="3.6" cy="4.6" r="1.9" fill="#2a8ff0"/><circle cx="3.6" cy="11.5" r="1.9" fill="#2a8ff0"/><circle cx="3.6" cy="18.3" r="1.9" fill="#2a8ff0"/></svg>
<div class="t" style="left:372.25px;top:620.0px;font-size:18.3px;line-height:18.3px;color:#545a61;transform:scaleX(1.1275);transform-origin:0 0;">4</div>
<div class="t" style="left:466.75px;top:592.0px;font-size:18.3px;line-height:18.3px;color:#545a61;letter-spacing:0.454px;transform:scaleX(1.0837);transform-origin:0 0;">Satelite JJM-</div>
<div class="t" style="left:475.00px;top:620.0px;font-size:18.3px;line-height:18.3px;color:#545a61;letter-spacing:0.256px;transform:scaleX(1.0410);transform-origin:0 0;">-99881199 -</div>
<div class="t" style="left:485.00px;top:649.0px;font-size:18.3px;line-height:18.3px;color:#545a61;letter-spacing:0.219px;transform:scaleX(1.0296);transform-origin:0 0;">99881199</div>
<div class="t" style="left:667.00px;top:620.0px;font-size:18.3px;line-height:18.3px;color:#545a61;letter-spacing:0.286px;transform:scaleX(1.0270);transform-origin:0 0;">GSPL</div>
<div class="t" style="left:814.70px;top:620.0px;font-size:18.3px;line-height:18.3px;color:#545a61;letter-spacing:1.190px;transform:scaleX(1.0756);transform-origin:0 0;">NA</div>
<div class="t" style="left:950.00px;top:620.0px;font-size:18.3px;line-height:18.3px;color:#545a61;letter-spacing:0.882px;transform:scaleX(1.0812);transform-origin:0 0;">PUMP</div>
<div class="t" style="left:1077.30px;top:620.0px;font-size:18.3px;line-height:18.3px;color:#545a61;letter-spacing:0.290px;transform:scaleX(1.0436);transform-origin:0 0;">2025-07-18</div>
<div class="t" style="left:1211.50px;top:620.0px;font-size:18.3px;line-height:18.3px;color:#545a61;letter-spacing:0.314px;transform:scaleX(1.0474);transform-origin:0 0;">2025-07-19</div>
<div class="t" style="left:1415.16px;top:620.0px;font-size:18.3px;line-height:18.3px;color:#545a61;transform:scaleX(0.8500);transform-origin:0 0;">1</div>
<div class="t" style="left:1555.80px;top:620.0px;font-size:18.3px;line-height:18.3px;color:#545a61;letter-spacing:0.607px;transform:scaleX(1.0865);transform-origin:0 0;">08:00</div>
<div class="t" style="left:1694.70px;top:620.0px;font-size:18.3px;line-height:18.3px;color:#545a61;letter-spacing:0.079px;transform:scaleX(1.0105);transform-origin:0 0;">17:00</div>
<div class="b" style="left:1800px;top:607px;width:45px;height:45px;border:1.2px solid #2196f3;box-sizing:border-box;background:#fff;"></div>
<svg class="b" style="left:1819.5px;top:617px" width="8" height="24" viewBox="0 0 8 24"><circle cx="3.6" cy="4.6" r="1.9" fill="#2a8ff0"/><circle cx="3.6" cy="11.5" r="1.9" fill="#2a8ff0"/><circle cx="3.6" cy="18.3" r="1.9" fill="#2a8ff0"/></svg>
<div class="t" style="left:372.75px;top:720.0px;font-size:18.3px;line-height:18.3px;color:#545a61;transform:scaleX(1.0294);transform-origin:0 0;">5</div>
<div class="t" style="left:466.75px;top:692.0px;font-size:18.3px;line-height:18.3px;color:#545a61;letter-spacing:0.454px;transform:scaleX(1.0837);transform-origin:0 0;">Satelite JJM-</div>
<div class="t" style="left:475.00px;top:720.0px;font-size:18.3px;line-height:18.3px;color:#545a61;letter-spacing:0.256px;transform:scaleX(1.0410);transform-origin:0 0;">-99881199 -</div>
<div class="t" style="left:485.00px;top:749.0px;font-size:18.3px;line-height:18.3px;color:#545a61;letter-spacing:0.219px;transform:scaleX(1.0296);transform-origin:0 0;">99881199</div>
<div class="t" style="left:667.00px;top:720.0px;font-size:18.3px;line-height:18.3px;color:#545a61;letter-spacing:0.286px;transform:scaleX(1.0270);transform-origin:0 0;">GSPL</div>
<div class="t" style="left:814.70px;top:720.0px;font-size:18.3px;line-height:18.3px;color:#545a61;letter-spacing:1.190px;transform:scaleX(1.0756);transform-origin:0 0;">NA</div>
<div class="t" style="left:941.80px;top:720.0px;font-size:18.3px;line-height:18.3px;color:#545a61;letter-spacing:0.325px;transform:scaleX(1.0349);transform-origin:0 0;">OUTLET</div>
<div class="t" style="left:1077.60px;top:720.0px;font-size:18.3px;line-height:18.3px;color:#545a61;letter-spacing:0.265px;transform:scaleX(1.0397);transform-origin:0 0;">2025-07-17</div>
<div class="t" style="left:1211.50px;top:720.0px;font-size:18.3px;line-height:18.3px;color:#545a61;letter-spacing:0.314px;transform:scaleX(1.0474);transform-origin:0 0;">2025-07-21</div>
<div class="t" style="left:1414.25px;top:720.0px;font-size:18.3px;line-height:18.3px;color:#545a61;transform:scaleX(1.0294);transform-origin:0 0;">5</div>
<div class="t" style="left:1556.25px;top:720.0px;font-size:18.3px;line-height:18.3px;color:#545a61;letter-spacing:0.530px;transform:scaleX(1.0747);transform-origin:0 0;">07:30</div>
<div class="t" style="left:1692.00px;top:720.0px;font-size:18.3px;line-height:18.3px;color:#545a61;letter-spacing:0.573px;transform:scaleX(1.0812);transform-origin:0 0;">20:30</div>
<div class="b" style="left:1800px;top:707px;width:45px;height:45px;border:1.2px solid #2196f3;box-sizing:border-box;background:#fff;"></div>
<svg class="b" style="left:1819.5px;top:717px" width="8" height="24" viewBox="0 0 8 24"><circle cx="3.6" cy="4.6" r="1.9" fill="#2a8ff0"/><circle cx="3.6" cy="11.5" r="1.9" fill="#2a8ff0"/><circle cx="3.6" cy="18.3" r="1.9" fill="#2a8ff0"/></svg>
<div class="t" style="left:372.50px;top:806.0px;font-size:18.3px;line-height:18.3px;color:#545a61;transform:scaleX(1.0784);transform-origin:0 0;">6</div>
<div class="t" style="left:434.50px;top:791.0px;font-size:18.3px;line-height:18.3px;color:#545a61;letter-spacing:0.511px;transform:scaleX(1.0877);transform-origin:0 0;">Vastrapur--7868001</div>
<div class="t" style="left:482.00px;top:820.0px;font-size:18.3px;line-height:18.3px;color:#545a61;letter-spacing:0.360px;transform:scaleX(1.0553);transform-origin:0 0;">- 7868001</div>
<div class="t" style="left:640.00px;top:806.0px;font-size:18.3px;line-height:18.3px;color:#545a61;letter-spacing:0.505px;transform:scaleX(1.0688);transform-origin:0 0;">JJM-QPAIX</div>
<div class="t" style="left:796.30px;top:806.0px;font-size:18.3px;line-height:18.3px;color:#545a61;letter-spacing:0.334px;transform:scaleX(1.0428);transform-origin:0 0;">543253</div>
<div class="t" style="left:950.00px;top:806.0px;font-size:18.3px;line-height:18.3px;color:#545a61;letter-spacing:0.882px;transform:scaleX(1.0812);transform-origin:0 0;">PUMP</div>
<div class="t" style="left:1076.00px;top:806.0px;font-size:18.3px;line-height:18.3px;color:#545a61;letter-spacing:0.394px;transform:scaleX(1.0603);transform-origin:0 0;">2025-06-30</div>
<div class="t" style="left:1211.00px;top:806.0px;font-size:18.3px;line-height:18.3px;color:#545a61;letter-spacing:0.354px;transform:scaleX(1.0538);transform-origin:0 0;">2025-07-09</div>
<div class="t" style="left:1410.30px;top:806.0px;font-size:18.3px;line-height:18.3px;color:#545a61;letter-spacing:-0.828px;transform:scaleX(0.9425);transform-origin:0 0;">10</div>
<div class="t" style="left:1555.80px;top:806.0px;font-size:18.3px;line-height:18.3px;color:#545a61;letter-spacing:0.607px;transform:scaleX(1.0865);transform-origin:0 0;">06:00</div>
<div class="t" style="left:1694.70px;top:806.0px;font-size:18.3px;line-height:18.3px;color:#545a61;letter-spacing:0.079px;transform:scaleX(1.0105);transform-origin:0 0;">17:00</div>
<div class="b" style="left:1800px;top:792px;width:45px;height:45px;border:1.2px solid #2196f3;box-sizing:border-box;background:#fff;"></div>
<svg class="b" style="left:1819.5px;top:802px" width="8" height="24" viewBox="0 0 8 24"><circle cx="3.6" cy="4.6" r="1.9" fill="#2a8ff0"/><circle cx="3.6" cy="11.5" r="1.9" fill="#2a8ff0"/><circle cx="3.6" cy="18.3" r="1.9" fill="#2a8ff0"/></svg>
<div class="t" style="left:373.00px;top:877.0px;font-size:18.3px;line-height:18.3px;color:#545a61;transform:scaleX(0.9804);transform-origin:0 0;">7</div>
<div class="t" style="left:434.50px;top:862.0px;font-size:18.3px;line-height:18.3px;color:#545a61;letter-spacing:0.511px;transform:scaleX(1.0877);transform-origin:0 0;">Vastrapur--7868001</div>
<div class="t" style="left:482.00px;top:891.0px;font-size:18.3px;line-height:18.3px;color:#545a61;letter-spacing:0.360px;transform:scaleX(1.0553);transform-origin:0 0;">- 7868001</div>
<div class="t" style="left:640.00px;top:877.0px;font-size:18.3px;line-height:18.3px;color:#545a61;letter-spacing:0.505px;transform:scaleX(1.0688);transform-origin:0 0;">JJM-QPAIX</div>
<div class="t" style="left:796.30px;top:877.0px;font-size:18.3px;line-height:18.3px;color:#545a61;letter-spacing:0.334px;transform:scaleX(1.0428);transform-origin:0 0;">543253</div>
<div class="t" style="left:950.00px;top:877.0px;font-size:18.3px;line-height:18.3px;color:#545a61;letter-spacing:0.882px;transform:scaleX(1.0812);transform-origin:0 0;">PUMP</div>
<div class="t" style="left:1076.00px;top:877.0px;font-size:18.3px;line-height:18.3px;color:#545a61;letter-spacing:0.394px;transform:scaleX(1.0603);transform-origin:0 0;">2025-06-30</div>
<div class="t" style="left:1211.00px;top:877.0px;font-size:18.3px;line-height:18.3px;color:#545a61;letter-spacing:0.354px;transform:scaleX(1.0538);transform-origin:0 0;">2025-07-09</div>
<div class="t" style="left:1410.30px;top:877.0px;font-size:18.3px;line-height:18.3px;color:#545a61;letter-spacing:-0.828px;transform:scaleX(0.9425);transform-origin:0 0;">10</div>
<div class="t" style="left:1555.80px;top:877.0px;font-size:18.3px;line-height:18.3px;color:#545a61;letter-spacing:0.607px;transform:scaleX(1.0865);transform-origin:0 0;">06:00</div>
<div class="t" style="left:1694.70px;top:877.0px;font-size:18.3px;line-height:18.3px;color:#545a61;letter-spacing:0.079px;transform:scaleX(1.0105);transform-origin:0 0;">17:00</div>
<div class="b" style="left:1800px;top:863px;width:45px;height:45px;border:1.2px solid #2196f3;box-sizing:border-box;background:#fff;"></div>
<svg class="b" style="left:1819.5px;top:873px" width="8" height="24" viewBox="0 0 8 24"><circle cx="3.6" cy="4.6" r="1.9" fill="#2a8ff0"/><circle cx="3.6" cy="11.5" r="1.9" fill="#2a8ff0"/><circle cx="3.6" cy="18.3" r="1.9" fill="#2a8ff0"/></svg>
</div>
</body></html>
